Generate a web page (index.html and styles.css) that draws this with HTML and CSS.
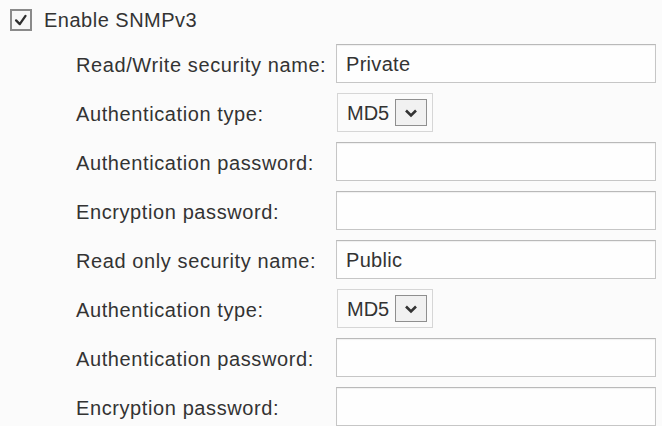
FILE: index.html
```html
<!DOCTYPE html>
<html>
<head>
<meta charset="utf-8">
<link rel="stylesheet" href="styles.css">
</head>
<body>
<div class="page">
  <div class="enable">
    <span class="checkbox">
      <svg viewBox="0 0 22 22" width="20" height="20"><path d="M5 11.5 L9.5 16 L16.5 6" fill="none" stroke="#2e2e2e" stroke-width="2.8" stroke-linecap="round" stroke-linejoin="round"/></svg>
    </span>
    <span class="enable-text">Enable SNMPv3</span>
  </div>
  <div class="form">
    <div class="label">Read/Write security name:</div>
    <div class="field">Private</div>

    <div class="label">Authentication type:</div>
    <div class="select"><span class="select-value">MD5</span><span class="select-btn"><svg viewBox="0 0 14 10" width="14" height="10"><path d="M2 2.5 L7 7.5 L12 2.5" fill="none" stroke="#333" stroke-width="2.6" stroke-linejoin="miter"/></svg></span></div>

    <div class="label">Authentication password:</div>
    <div class="field"></div>

    <div class="label">Encryption password:</div>
    <div class="field"></div>

    <div class="label">Read only security name:</div>
    <div class="field">Public</div>

    <div class="label">Authentication type:</div>
    <div class="select"><span class="select-value">MD5</span><span class="select-btn"><svg viewBox="0 0 14 10" width="14" height="10"><path d="M2 2.5 L7 7.5 L12 2.5" fill="none" stroke="#333" stroke-width="2.6" stroke-linejoin="miter"/></svg></span></div>

    <div class="label">Authentication password:</div>
    <div class="field"></div>

    <div class="label">Encryption password:</div>
    <div class="field"></div>
  </div>
</div>
</body>
</html>
```

FILE: styles.css
```css
html, body {
  margin: 0;
  padding: 0;
  background: #fbfbfb;
}

body {
  font-family: "Liberation Sans", Arial, sans-serif;
  font-size: 20px;
  color: #333333;
}

.page {
  padding: 9px 0 0 10px;
}

.enable {
  display: flex;
  align-items: center;
  height: 22px;
  gap: 12px;
}

.checkbox {
  box-sizing: border-box;
  width: 22px;
  height: 22px;
  border: 2px solid #8a8a8a;
  background: #f7f7f7;
  display: flex;
  align-items: center;
  justify-content: center;
}

.checkbox svg {
  display: block;
}

.enable-text {
  letter-spacing: 0.5px;
}

.form {
  margin-top: 13px;
  margin-left: 66px;
  display: grid;
  grid-template-columns: 260px 320px;
  grid-auto-rows: 39px;
  row-gap: 10px;
}

.label {
  display: flex;
  align-items: center;
  padding-top: 4px;
  letter-spacing: 0.6px;
  white-space: nowrap;
}

.field {
  box-sizing: border-box;
  border: 1px solid #c6c6c6;
  border-top-color: #b9b9b9;
  background: #fefefe;
  box-shadow: inset 0 1px 1px rgba(0, 0, 0, 0.06);
  padding: 0 9px;
  display: flex;
  align-items: center;
  padding-top: 2px;
  letter-spacing: 0.3px;
}

.select {
  box-sizing: border-box;
  width: 96px;
  margin-left: 1px;
  border: 1px solid #d6d6d6;
  background: #fbfbfb;
  display: flex;
  align-items: center;
  justify-content: space-between;
  padding: 0 5px 0 9px;
}

.select-value {
  padding-top: 2px;
}

.select-btn {
  box-sizing: border-box;
  width: 32px;
  height: 27px;
  border: 1px solid #8f8f8f;
  background: #f1f1f1;
  display: flex;
  align-items: center;
  justify-content: center;
}

.select-btn svg {
  display: block;
}
```
